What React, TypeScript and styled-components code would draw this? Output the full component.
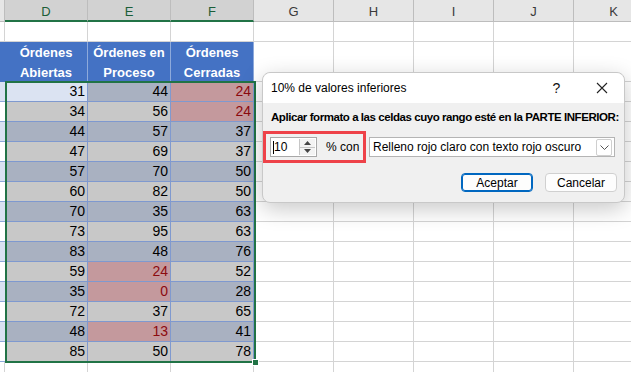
import React from "react";
import styled, { createGlobalStyle, css } from "styled-components";

const Global = createGlobalStyle`
  html, body { margin: 0; padding: 0; background: #fff; }
  body { width: 631px; height: 372px; overflow: hidden; font-family: "Liberation Sans", Arial, sans-serif; }
`;

const Root = styled.div`
  position: relative;
  width: 631px;
  height: 372px;
  overflow: hidden;
  background: #fff;
`;

const Sheet = styled.div`
  display: flex;
  flex-direction: column;
  width: 700px;
`;

const Row = styled.div<{ $h: number }>`
  display: flex;
  height: ${(p) => p.$h}px;
`;

const ColHead = styled.div<{ $w: number; $sel?: boolean }>`
  box-sizing: border-box;
  width: ${(p) => p.$w}px;
  flex: none;
  height: 22px;
  display: flex;
  align-items: center;
  justify-content: center;
  padding-top: 2px;
  font-size: 13px;
  color: #3a3a3a;
  background: #e6e6e6;
  border-right: 1px solid #bdbdbd;
  border-bottom: 1px solid #bdbdbd;
  ${(p) =>
    p.$sel &&
    css`
      background: #d2d2d2;
      color: #1b5e38;
      border-bottom: 2px solid #217346;
    `}
`;

const Cell = styled.div<{ $w: number; $bg?: string; $line?: string }>`
  box-sizing: border-box;
  width: ${(p) => p.$w}px;
  flex: none;
  height: 100%;
  background: ${(p) => p.$bg || "#fff"};
  border-right: 1px solid ${(p) => p.$line || "#d4d4d4"};
  border-bottom: 1px solid ${(p) => p.$line || "#d4d4d4"};
`;

const HeadCell = styled.div`
  box-sizing: border-box;
  width: 83px;
  flex: none;
  height: 100%;
  background: #4472c4;
  border-right: 1px solid #8eaadb;
  color: #fff;
  font-weight: bold;
  font-size: 13px;
  line-height: 20px;
  text-align: center;
  padding-top: 1px;
`;

const DataSection = styled.div`
  display: flex;
`;

const Column = styled.div`
  display: flex;
  flex-direction: column;
`;

const SliverCell = styled.div<{ $band: boolean }>`
  box-sizing: border-box;
  width: 5px;
  height: 20px;
  background: ${(p) => (p.$band ? "#d9e1f2" : "#ffffff")};
  border-bottom: 1px solid #8ea9db;
`;

const DataBlock = styled.div`
  position: relative;
  display: grid;
  grid-template-columns: repeat(3, 83px);
  grid-auto-rows: 20px;
  &::after {
    content: "";
    position: absolute;
    left: 0;
    top: -1px;
    right: -2px;
    bottom: -1px;
    border: 2px solid #217346;
    pointer-events: none;
  }
`;

const FillHandle = styled.div`
  position: absolute;
  right: -5px;
  bottom: -4px;
  width: 5px;
  height: 5px;
  background: #217346;
  border: 1px solid #fff;
  z-index: 2;
`;

type Kind = "blue" | "gray" | "red" | "active";

const DataCell = styled.div<{ $kind: Kind }>`
  box-sizing: border-box;
  border-right: 1px solid #7f99cf;
  border-bottom: 1px solid #7f99cf;
  font-size: 14px;
  line-height: 19px;
  text-align: right;
  padding-right: 2px;
  color: ${(p) => (p.$kind === "red" ? "#8c0a10" : "#000")};
  background: ${(p) =>
    p.$kind === "blue"
      ? "#a9b1c1"
      : p.$kind === "gray"
      ? "#c8c8c8"
      : p.$kind === "red"
      ? "#c4999d"
      : "#dbe3f2"};
`;

const RightGrid = styled.div`
  display: grid;
  grid-template-columns: repeat(5, 80px);
  grid-auto-rows: 20px;
`;

const GridCell = styled.div`
  box-sizing: border-box;
  border-right: 1px solid #d4d4d4;
  border-bottom: 1px solid #d4d4d4;
`;

/* Dialog */
const Dialog = styled.div`
  position: absolute;
  left: 262px;
  top: 72px;
  width: 363px;
  height: 131px;
  box-sizing: border-box;
  border: 1px solid #c8c8c8;
  border-radius: 8px;
  overflow: visible;
  background: #f0f0f0;
  box-shadow: 0 6px 22px rgba(0, 0, 0, 0.22);
  display: flex;
  flex-direction: column;
  z-index: 5;
`;

const TitleBar = styled.div`
  height: 30px;
  flex: none;
  background: #fff;
  border-radius: 8px 8px 0 0;
  display: flex;
  align-items: center;
  padding-left: 8px;
  font-size: 12px;
  color: #000;
`;

const Title = styled.span`
  flex: 1;
`;

const TitleBtn = styled.div`
  width: 45px;
  height: 30px;
  display: flex;
  align-items: center;
  justify-content: center;
  font-size: 14px;
  color: #111;
`;

const Body = styled.div`
  flex: 1;
  padding: 6px 7px 0 8px;
  display: flex;
  flex-direction: column;
`;

const Prompt = styled.div`
  font-weight: bold;
  font-size: 11.5px;
  letter-spacing: -0.44px;
  line-height: 16px;
  color: #000;
  white-space: nowrap;
`;

const ControlRow = styled.div`
  display: flex;
  align-items: center;
  margin-top: 6px;
`;

const Highlight = styled.div`
  box-sizing: border-box;
  margin-left: -8px;
  width: 103px;
  height: 32px;
  border: 3px solid #ee4249;
  display: flex;
  align-items: center;
  padding-left: 4px;
`;

const NumInput = styled.div`
  box-sizing: border-box;
  width: 47px;
  height: 20px;
  background: #fff;
  border: 1px solid #a8a8a8;
  display: flex;
  align-items: stretch;
`;

const NumText = styled.div`
  flex: 1;
  font-size: 12px;
  line-height: 18px;
  padding-left: 2px;
  display: flex;
  align-items: center;
`;

const Caret = styled.span`
  display: inline-block;
  width: 1px;
  height: 13px;
  background: #000;
`;

const Spinner = styled.div`
  width: 15px;
  display: flex;
  flex-direction: column;
  border-left: 1px solid #c6c6c6;
  margin: 1px 1px 1px 0;
  background: #f3f3f3;
`;

const SpinHalf = styled.div<{ $up?: boolean }>`
  flex: 1;
  display: flex;
  align-items: center;
  justify-content: center;
  ${(p) => p.$up && "border-bottom: 1px solid #c6c6c6;"}
`;

const PctLabel = styled.span`
  font-size: 12px;
  margin-left: 9px;
  color: #000;
`;

const Select = styled.div`
  box-sizing: border-box;
  margin-left: 3px;
  width: 246px;
  height: 20px;
  background: #fff;
  border: 1px solid #b4b4b4;
  display: flex;
  align-items: center;
  padding-left: 3px;
  font-size: 12px;
  color: #000;
`;

const SelectText = styled.span`
  flex: 1;
`;

const SelectArrow = styled.div`
  box-sizing: border-box;
  width: 16px;
  height: 17px;
  margin-right: 2px;
  border: 1px solid #cfcfcf;
  border-radius: 2px;
  display: flex;
  align-items: center;
  justify-content: center;
`;

const Buttons = styled.div`
  display: flex;
  justify-content: flex-end;
  gap: 12px;
  margin-top: 10px;
`;

const Button = styled.div<{ $primary?: boolean }>`
  box-sizing: border-box;
  width: 72px;
  height: 19px;
  background: #fdfdfd;
  border: 1px solid ${(p) => (p.$primary ? "#0067c0" : "#d0d0d0")};
  ${(p) => p.$primary && "box-shadow: inset 0 0 0 1px #0067c0;"}
  border-radius: 4px;
  display: flex;
  align-items: center;
  justify-content: center;
  font-size: 12px;
  color: #000;
`;

const data: [number, Kind][][] = [
  [[31, "active"], [44, "blue"], [24, "red"]],
  [[34, "gray"], [56, "gray"], [24, "red"]],
  [[44, "blue"], [57, "blue"], [37, "blue"]],
  [[47, "gray"], [69, "gray"], [37, "gray"]],
  [[57, "blue"], [70, "blue"], [50, "blue"]],
  [[60, "gray"], [82, "gray"], [50, "gray"]],
  [[70, "blue"], [35, "blue"], [63, "blue"]],
  [[73, "gray"], [95, "gray"], [63, "gray"]],
  [[83, "blue"], [48, "blue"], [76, "blue"]],
  [[59, "gray"], [24, "red"], [52, "gray"]],
  [[35, "blue"], [0, "red"], [28, "blue"]],
  [[72, "gray"], [37, "gray"], [65, "gray"]],
  [[48, "blue"], [13, "red"], [41, "blue"]],
  [[85, "gray"], [50, "gray"], [78, "gray"]],
];

const cols = [
  { l: "", w: 5 },
  { l: "D", w: 83, s: true },
  { l: "E", w: 83, s: true },
  { l: "F", w: 83, s: true },
  { l: "G", w: 80 },
  { l: "H", w: 80 },
  { l: "I", w: 80 },
  { l: "J", w: 80 },
  { l: "K", w: 80 },
];

const rightCols = [80, 80, 80, 80, 80];

export default function App() {
  return (
    <Root>
      <Global />
      <Sheet>
        <Row $h={22}>
          {cols.map((c, i) => (
            <ColHead key={i} $w={c.w} $sel={c.s}>
              {c.l}
            </ColHead>
          ))}
        </Row>
        <Row $h={20}>
          {cols.map((c, i) => (
            <Cell key={i} $w={c.w} />
          ))}
        </Row>
        <Row $h={40}>
          <Cell $w={5} $bg="#4472c4" $line="#4472c4" />
          <HeadCell>
            Órdenes
            <br />
            Abiertas
          </HeadCell>
          <HeadCell>
            Órdenes en
            <br />
            Proceso
          </HeadCell>
          <HeadCell>
            Órdenes
            <br />
            Cerradas
          </HeadCell>
          {rightCols.map((w, i) => (
            <Cell key={i} $w={w} />
          ))}
        </Row>
        <DataSection>
          <Column>
            {data.map((_, i) => (
              <SliverCell key={i} $band={i % 2 === 0} />
            ))}
          </Column>
          <DataBlock>
            {data.flatMap((r, ri) =>
              r.map(([v, k], ci) => (
                <DataCell key={`${ri}-${ci}`} $kind={k}>
                  {v}
                </DataCell>
              ))
            )}
            <FillHandle />
          </DataBlock>
          <RightGrid>
            {Array.from({ length: 14 * 5 }).map((_, i) => (
              <GridCell key={i} />
            ))}
          </RightGrid>
        </DataSection>
        <Row $h={20}>
          {cols.map((c, i) => (
            <Cell key={i} $w={c.w} />
          ))}
        </Row>
      </Sheet>

      <Dialog>
        <TitleBar>
          <Title>10% de valores inferiores</Title>
          <TitleBtn>?</TitleBtn>
          <TitleBtn>
            <svg width="12" height="12" viewBox="0 0 12 12">
              <path d="M1 1 L11 11 M11 1 L1 11" stroke="#222" strokeWidth="1.1" fill="none" />
            </svg>
          </TitleBtn>
        </TitleBar>
        <Body>
          <Prompt>Aplicar formato a las celdas cuyo rango esté en la PARTE INFERIOR:</Prompt>
          <ControlRow>
            <Highlight>
              <NumInput>
                <NumText>
                  <Caret />
                  10
                </NumText>
                <Spinner>
                  <SpinHalf $up>
                    <svg width="7" height="4" viewBox="0 0 7 4">
                      <path d="M0 4 L3.5 0 L7 4 Z" fill="#444" />
                    </svg>
                  </SpinHalf>
                  <SpinHalf>
                    <svg width="7" height="4" viewBox="0 0 7 4">
                      <path d="M0 0 L3.5 4 L7 0 Z" fill="#444" />
                    </svg>
                  </SpinHalf>
                </Spinner>
              </NumInput>
              <PctLabel>% con</PctLabel>
            </Highlight>
            <Select>
              <SelectText>Relleno rojo claro con texto rojo oscuro</SelectText>
              <SelectArrow>
                <svg width="9" height="5" viewBox="0 0 9 5">
                  <path d="M0.5 0.5 L4.5 4.5 L8.5 0.5" stroke="#555" strokeWidth="1" fill="none" />
                </svg>
              </SelectArrow>
            </Select>
          </ControlRow>
          <Buttons>
            <Button $primary>Aceptar</Button>
            <Button>Cancelar</Button>
          </Buttons>
        </Body>
      </Dialog>
    </Root>
  );
}
